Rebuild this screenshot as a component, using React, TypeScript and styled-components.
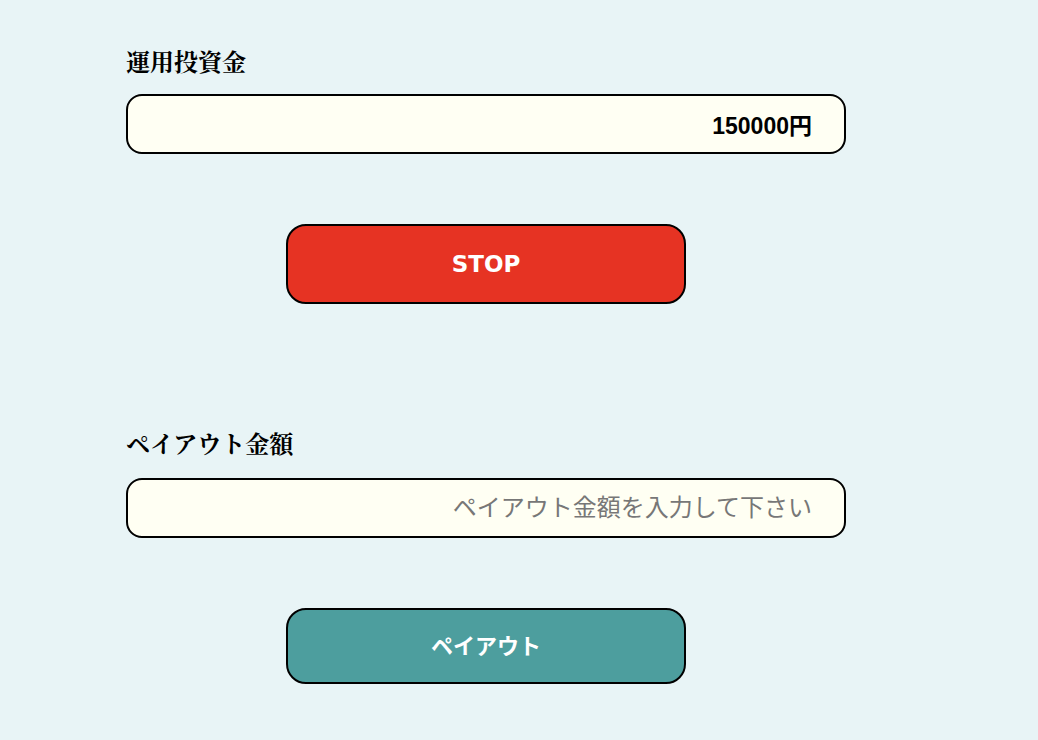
import React from "react";
import styled, { createGlobalStyle } from "styled-components";

const Global = createGlobalStyle`
  html, body { margin: 0; padding: 0; background: #e8f4f6; }
  body { font-family: "Liberation Sans", "Noto Sans CJK JP", sans-serif; }
`;

const Page = styled.div`
  width: 720px;
  padding: 48px 0 0 126px;
`;

const Section = styled.section<{ $top?: number }>`
  display: flex;
  flex-direction: column;
  margin-top: ${(p) => p.$top ?? 0}px;
`;

const Label = styled.label<{ $gap: number }>`
  font-family: "Liberation Serif", "Noto Serif CJK JP", "Noto Sans CJK JP", serif;
  font-weight: bold;
  font-size: 24px;
  line-height: 30px;
  height: 30px;
  color: #000;
  margin-bottom: ${(p) => p.$gap}px;
`;

const Field = styled.input`
  box-sizing: border-box;
  width: 720px;
  height: 60px;
  border: 2px solid #000;
  border-radius: 16px;
  background: #fffff3;
  padding: 0 32px;
  text-align: right;
  font-family: "Liberation Sans", "Noto Sans CJK JP", sans-serif;
  font-size: 23px;
  font-weight: bold;
  color: #000;
  outline: none;
  &::placeholder {
    color: #777;
    font-weight: normal;
    font-size: 24px;
  }
`;

const Action = styled.button<{ $bg: string; $h: number; $fs: number; $lift?: number }>`
  box-sizing: border-box;
  align-self: center;
  margin-top: 70px;
  width: 400px;
  height: ${(p) => p.$h}px;
  border: 2px solid #000;
  border-radius: 20px;
  background: ${(p) => p.$bg};
  color: #fff;
  font-family: "DejaVu Sans", "Noto Sans CJK JP", sans-serif;
  font-weight: bold;
  font-size: ${(p) => p.$fs}px;
  cursor: pointer;
  padding: 0 0 ${(p) => p.$lift ?? 0}px;
`;

export default function App() {
  return (
    <>
      <Global />
      <Page>
        <Section>
          <Label $gap={16}>運用投資金</Label>
          <Field value="150000円" readOnly />
          <Action $bg="#e63323" $h={80} $fs={23}>
            STOP
          </Action>
        </Section>
        <Section $top={126}>
          <Label $gap={18}>ペイアウト金額</Label>
          <Field placeholder="ペイアウト金額を入力して下さい" />
          <Action $bg="#4d9e9e" $h={76} $fs={22} $lift={4}>
            ペイアウト
          </Action>
        </Section>
      </Page>
    </>
  );
}
